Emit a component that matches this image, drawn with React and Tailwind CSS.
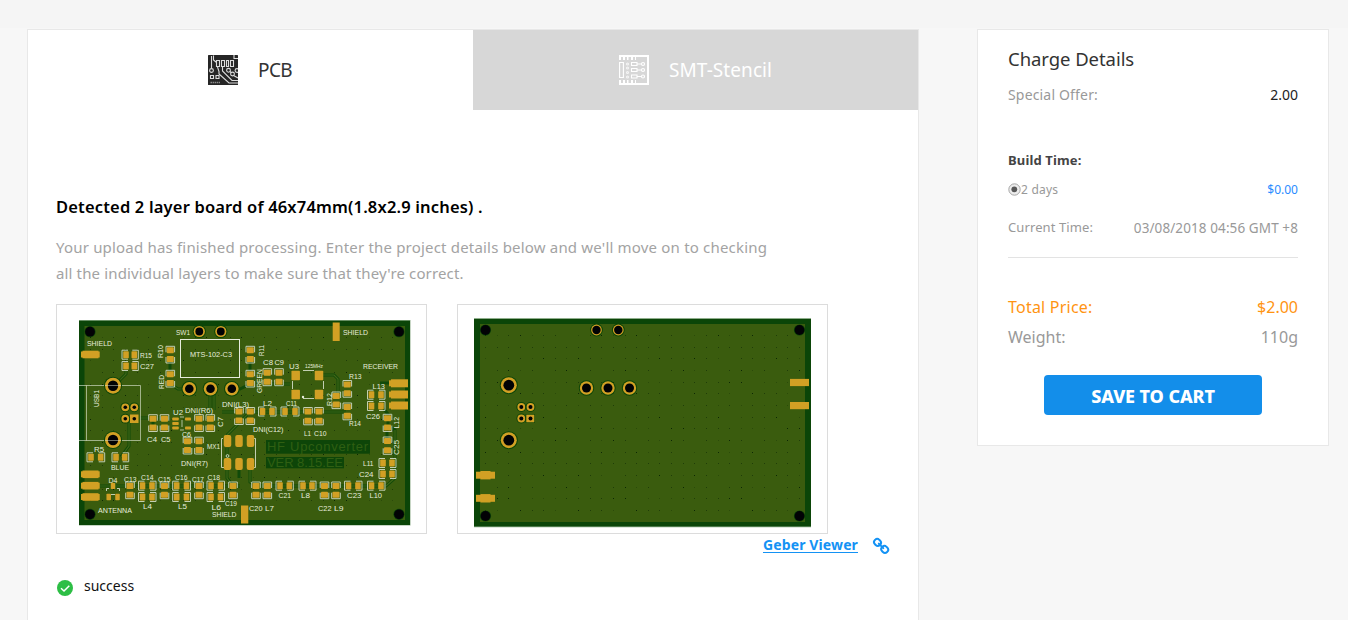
const SILK = '#e6ecdc';
const GOLD = '#d2a024';
const COPPER = '#3a5c0e';
const MASK = '#0b4508';

// Horizontal silkscreen labels: text, start x, end x, baseline
const labels = [
  ['SHIELD', 87, 112, 346], ['R15', 140, 152, 357.5], ['C27', 140, 154, 369], ['SW1', 176, 190, 334.5],
  ['MTS-102-C3', 190, 232, 357], ['C8', 263, 273, 365], ['C9', 274.5, 284, 365], ['U3', 289, 299, 368.5],
  ['SHIELD', 343, 368, 334.5], ['R13', 349, 361.5, 379], ['RECEIVER', 363, 398, 369], ['L13', 372.5, 385, 389],
  ['C26', 366, 380, 419], ['L2', 263, 272, 406], ['C11', 286, 297, 406], ['L1', 304, 311, 436],
  ['C10', 314, 326.5, 436], ['DNI(L3)', 222, 249, 407], ['DNI(C12)', 253, 283.5, 432], ['U2', 173, 183, 414.5],
  ['DNI(R6)', 185, 213, 412.5], ['C4', 147, 157, 442], ['C5', 161, 170.5, 442], ['C6', 182, 191, 436.5],
  ['DNI(R7)', 181, 208, 466], ['MX1', 207, 220, 448.5], ['R5', 94, 104, 451.5], ['BLUE', 111, 129, 469.5],
  ['D4', 108.5, 117.5, 482.5], ['C13', 124, 136.5, 481.5], ['C14', 141, 153.5, 480], ['C15', 158, 170.5, 481.5],
  ['C16', 175, 187.5, 480], ['C17', 192, 204, 481.5], ['C18', 207.5, 220, 480], ['L4', 143, 152, 508.5],
  ['L5', 178, 187, 508.5], ['L6', 211.5, 221, 509.5], ['C19', 225, 237, 506], ['SHIELD', 212, 236.5, 517],
  ['ANTENNA', 98, 132, 513], ['C20', 249, 262.5, 511], ['L7', 265, 274, 511], ['C21', 278.5, 291, 497.5],
  ['L8', 301, 310, 497.5], ['C22', 318, 331.5, 511], ['L9', 334, 343.5, 511], ['C23', 347, 361.5, 497.5],
  ['L10', 369.5, 382, 497.5], ['L11', 363, 373.5, 466], ['C24', 359, 373.5, 477], ['R14', 349, 361, 426],
];

// Labels turned by 90 degrees: text, baseline x, top y, bottom y
const uprights = [
  ['R10', 162.5, 345, 358], ['RED', 163.5, 375, 389], ['USB1', 98.5, 390, 407], ['R11', 264, 345, 356],
  ['GREEN', 262, 369, 393], ['R12', 331.5, 393, 406], ['L12', 399, 417, 428.5], ['C25', 399, 440, 455],
  ['C7', 222.5, 417, 427],
];

// Two-pad parts lying on a row
const rowParts = [
  [126, 134.3, 354.7], [126, 134.3, 366], [371.5, 381, 394.7], [371.5, 381, 406], [262.5, 272, 411.5],
  [285, 295, 411.5], [91, 100.7, 457.3], [116, 124.7, 457.3], [142.5, 152, 485.7], [142.5, 152, 497],
  [176.7, 186.5, 485.7], [176.7, 186.5, 497], [211, 220.5, 485.7], [211, 220.5, 497], [280, 289.3, 485.7],
  [303, 312, 485.7], [348.5, 358, 485.7], [371.5, 381, 485.7], [383, 392, 463], [383, 392, 474],
];

// Two-pad parts standing in a column
const colParts = [
  [170.3, 350.3, 359], [170.3, 374.3, 383], [250.3, 350.3, 359], [250.3, 374.3, 383], [267.3, 372.7, 381.7],
  [279, 372.7, 381.7], [347.3, 384.5, 393.2], [336.3, 396, 404.6], [347.3, 407, 415.8], [387.5, 418.3, 427.5],
  [387.5, 441, 450.3], [308, 411.5, 420.8], [319, 411.5, 420.8], [239, 411.5, 420.5], [250.3, 411.5, 420.5],
  [153, 418.7, 427.5], [164.5, 418.7, 427.5], [199, 418.7, 427.5], [210.3, 418.7, 427.5], [187.5, 441.2, 450],
  [199, 441.2, 450], [130, 486, 494.7], [164.5, 486, 494.7], [199, 486, 494.7], [233, 486, 494.7],
  [256, 486, 494.7], [267.3, 486, 494.7], [324.5, 486, 494.7], [336, 486, 494.7],
];

function Pad({ x, y, w = 6, h = 6, r = 0.8 }) {
  return <rect x={x - w / 2} y={y - h / 2} width={w} height={h} rx={r} fill={GOLD} />;
}

function Hole({ x, y, outer, inner }) {
  return (
    <g>
      <circle cx={x} cy={y} r={outer + 1} fill={MASK} />
      <circle cx={x} cy={y} r={outer} fill={GOLD} />
      <circle cx={x} cy={y} r={inner} fill="#020205" />
    </g>
  );
}

function Corner({ x, y }) {
  return (
    <g>
      <circle cx={x} cy={y} r="5.6" fill={MASK} />
      <circle cx={x} cy={y} r="4.9" fill="#020205" />
    </g>
  );
}

// Stitching vias on an 11.6px grid; some print darker than others
function Vias({ x, y, cols, rows }) {
  const dots = [];
  for (let r = 0; r < rows; r += 1) {
    for (let c = 0; c < cols; c += 1) {
      const n = (c * 7 + r * 13 + c * r * 3) % 10;
      if (n === 9) continue;
      dots.push([Math.round(x + c * 11.63), Math.round(y + r * 11.66), n < 2 ? 0.95 : n < 6 ? 0.55 : 0.3]);
    }
  }
  return (
    <g fill="#0a2404" shapeRendering="crispEdges">
      {dots.map(([dx, dy, o]) => (
        <rect key={`${dx}-${dy}`} x={dx} y={dy} width="1" height="1" opacity={o} />
      ))}
    </g>
  );
}

function FrontBoard() {
  return (
    <svg viewBox="57 305 369 228" className="block h-[228px] w-[369px]">
      <rect x="79" y="320" width="331.5" height="205.5" fill="#8fae8c" />
      <rect x="79" y="320.7" width="331" height="204.3" fill={MASK} />
      <rect x="84.5" y="326" width="320.5" height="194" fill={COPPER} />
      <Vias x={90} y={337} cols={27} rows={15} />

      <g fill="none" stroke="#114a09" strokeWidth="3">
        <path d="M126 368V374L114 386M170 362V372M170 384L178 389H189M210 392V412M214 392V410M129 420V446L121 457" />
        <path d="M140 418H170M153 430V418M233 389H240L250 384M250 362V372M267 384H290M322 375H334L338 379V396" />
        <path d="M222 412H346M247 415L227 435M227 448V478L233 486M250 470V482L256 486M239 470V478" />
        <path d="M100 486H240M256 486H386L395 478V430L387 424M380 383H390M381 406L388 414V430M387 430V442" />
      </g>
      <g fill="none" stroke="#416616" strokeWidth="1.2">
        <path d="M126 368V374L114 386M210 392V412M129 420V446L121 457M222 412H346M247 415L227 435" />
        <path d="M100 486H240M256 486H386L395 478V430M322 375H334L338 379V396M170 384L178 389H189" />
        <path d="M227 448V478L233 486M250 470V482L256 486M267 384H290M214 392V410M140 418H170" />
      </g>

      <g fill="none" stroke={SILK} strokeWidth="1">
        <rect x="180.5" y="339.5" width="59" height="38" />
        <path d="M79 385.5H140.5V440.5H79M86.5 385.5V440.5" opacity="0.6" />
        <path d="M303 370.5H314M303 398.5H314M292.5 381V389M323.5 381V389" opacity="0.8" />
        <path d="M223 438.5H221.5V467.5H224M254 438.5H255.5V467.5H253" opacity="0.8" />
        <path d="M106.5 491V488.5H109M117 488.5H119.5V491M111 494.5H115" opacity="0.8" />
        <path d="M180 417H184M180 430H184M182 420V427" opacity="0.7" />
      </g>

      <g fill="none" stroke={SILK} strokeWidth="1" opacity="0.8">
        {rowParts.map(([a, b, y]) => (
          <path
            key={`${a}-${y}`}
            d={`M${a + 2} ${y - 4.5}H${a - 4}V${y + 4.5}H${a + 2}M${b - 2} ${y - 4.5}H${b + 4}V${y + 4.5}H${b - 2}`}
          />
        ))}
        {colParts.map(([x, a, b]) => (
          <path
            key={`${x}-${a}`}
            d={`M${x - 4.3} ${a + 2}V${a - 4}H${x + 4.3}V${a + 2}M${x - 4.3} ${b - 2}V${b + 4}H${x + 4.3}V${b - 2}`}
          />
        ))}
      </g>
      {rowParts.map(([a, b, y]) => (
        <g key={`${a}-${y}`}>
          <Pad x={a} y={y} w={5.6} h={7} />
          <Pad x={b} y={y} w={5.6} h={7} />
        </g>
      ))}
      {colParts.map(([x, a, b]) => (
        <g key={`${x}-${a}`}>
          <Pad x={x} y={a} w={7} h={6} />
          <Pad x={x} y={b} w={7} h={6} />
        </g>
      ))}

      {[295.7, 319].map((x) => [375.5, 394.5].map((y) => <Pad key={`${x}-${y}`} x={x} y={y} w={8.5} h={9.5} />))}
      {[227.5, 239, 250.5].map((x) =>
        [441, 464].map((y) => <Pad key={`${x}-${y}`} x={x} y={y} w={7.5} h={12} r={2} />),
      )}
      <circle cx="227.5" cy="456" r="1.4" fill="none" stroke={SILK} strokeWidth="0.8" />
      <circle cx="303" cy="397" r="1.2" fill={SILK} />
      {[419, 423.5, 428].map((y) => <Pad key={y} x={175.5} y={y} w={6.5} h={3} />)}
      {[419, 428].map((y) => <Pad key={y} x={188} y={y} w={6} h={3} />)}
      <Pad x={113} y={486} w={4.5} h={6} />
      <Pad x={108.7} y={497} w={4.5} h={6.5} />
      <Pad x={117.5} y={497} w={4.5} h={6.5} />
      {[354.5, 474.3, 485.7, 497].map((y) => (
        <g key={y}>
          <rect x="81" y={y - 3} width="18.7" height="6" fill={GOLD} />
          <rect x="82.5" y={y - 3.8} width="16" height="7.6" fill={GOLD} />
        </g>
      ))}
      {[383.3, 394.5, 405.5].map((y) => (
        <g key={y}>
          <rect x="389" y={y - 3} width="19" height="6" fill={GOLD} />
          <rect x="391" y={y - 4} width="17" height="8" fill={GOLD} />
        </g>
      ))}
      <rect x="332.7" y="322.5" width="7" height="18.5" fill={GOLD} />
      <rect x="241" y="505.5" width="7.3" height="18" fill={GOLD} />

      <Corner x={90} y={331.7} />
      <Corner x={399} y={331.7} />
      <Corner x={90} y={514.3} />
      <Corner x={399} y={514.3} />
      <Hole x={199.3} y={331.5} outer={5.6} inner={3.9} />
      <Hole x={220.8} y={331.5} outer={5.6} inner={3.9} />
      <Hole x={189.3} y={388.7} outer={6.8} inner={4.3} />
      <Hole x={210.5} y={388.7} outer={6.8} inner={4.3} />
      <Hole x={231.8} y={388.7} outer={6.8} inner={4.3} />
      <Hole x={113} y={385.7} outer={8} inner={5.2} />
      <Hole x={113} y={440} outer={8} inner={5.2} />
      <path d="M105 385.5H121M105 440.5H121" stroke={SILK} strokeWidth="1" opacity="0.45" />
      <Hole x={125.3} y={407.3} outer={3.9} inner={1.8} />
      <Hole x={134.3} y={407.3} outer={3.9} inner={1.8} />
      <Hole x={125.3} y={418.7} outer={3.9} inner={1.8} />
      <rect x="130" y="414.5" width="8.5" height="8.5" fill={GOLD} />
      <circle cx="134.3" cy="418.7" r="1.8" fill="#020205" />

      <rect x="266" y="440" width="104" height="13.7" fill="#0d4508" />
      <rect x="266" y="457" width="78" height="11.3" fill="#0d4508" />
      <g fill="#2f5f12" className="font-['Liberation_Sans',sans-serif]" fontSize="13">
        <text x="267" y="450.5" textLength="101" lengthAdjust="spacing">HF Upconverter</text>
        <text x="267" y="467.3" textLength="76" lengthAdjust="spacing">VER 8.15.EE</text>
      </g>

      <g fill={SILK} className="font-['Liberation_Sans',sans-serif]" fontSize="8">
        {labels.map(([t, a, b, y]) => (
          <text key={`${t}-${a}`} x={a} y={y} textLength={b - a} lengthAdjust="spacingAndGlyphs">{t}</text>
        ))}
        {uprights.map(([t, x, a, b]) => (
          <text
            key={t}
            transform={`translate(${x} ${b}) rotate(-90)`}
            textLength={b - a}
            lengthAdjust="spacingAndGlyphs"
          >
            {t}
          </text>
        ))}
        <text x="305" y="368" fontSize="6" textLength="18" lengthAdjust="spacingAndGlyphs">125MHz</text>
      </g>
    </svg>
  );
}

function BackBoard() {
  return (
    <svg viewBox="458 305 369 228" className="block h-[228px] w-[369px]">
      <rect x="474" y="318" width="337" height="209.3" fill="#8fae8c" />
      <rect x="474" y="319" width="337" height="207.5" fill={MASK} />
      <rect x="480" y="324" width="325" height="198" fill={COPPER} />
      <Vias x={485} y={335} cols={28} rows={16} />
      <Corner x={485.5} y={330} />
      <Corner x={799.5} y={330} />
      <Corner x={485.5} y={516} />
      <Corner x={799.5} y={516} />
      <Hole x={596.5} y={330} outer={5.4} inner={4.2} />
      <Hole x={618.3} y={330} outer={5.4} inner={4.2} />
      <Hole x={586.5} y={388} outer={6.7} inner={4.5} />
      <Hole x={608} y={388} outer={6.7} inner={4.5} />
      <Hole x={629.5} y={388} outer={6.7} inner={4.5} />
      <Hole x={508.8} y={385.2} outer={8} inner={5.4} />
      <Hole x={508.8} y={440.2} outer={8} inner={5.4} />
      <Hole x={521.3} y={407} outer={3.9} inner={2} />
      <Hole x={530.5} y={407} outer={3.9} inner={2} />
      <Hole x={521.3} y={418.5} outer={3.9} inner={2} />
      <rect x="525.5" y="414" width="9.5" height="9" fill={MASK} />
      <rect x="526.3" y="414.7" width="8" height="7.6" fill={GOLD} />
      <circle cx="530.5" cy="418.5" r="2" fill="#020205" />
      {[475.2, 498.3].map((y) => (
        <g key={y}>
          <rect x="476" y={y - 3.5} width="19" height="7" fill={GOLD} />
          <rect x="480.5" y={y - 4.2} width="10" height="8.4" fill={GOLD} />
        </g>
      ))}
      {[382.5, 405.6].map((y) => (
        <rect key={y} x="790" y={y - 3.6} width="19" height="7.2" fill={GOLD} />
      ))}
    </svg>
  );
}

function PcbIcon() {
  return (
    <svg viewBox="0 0 30 30" className="h-[30px] w-[30px]">
      <rect width="30" height="30" rx="0.5" fill="#262626" />
      <g fill="none" stroke="#dcdcdc" strokeWidth="1.1">
        <path d="M3.5 1V13M5.500 0.500V5L8.500 7.500M8.500 5.500H11.500V11.500H8.500ZM13.500 5.500H16.500V11.500H13.500ZM18.500 5.500H20.500V11.500H18.500ZM22.500 5.500H25.500V11.500H22.500Z" />
        <path d="M9.500 12L11 16.500V19L21 28H30M14.500 12V16L24 25.500H30M26 0V3.500H30" />
        <path d="M2.500 20.500H5.500V23.500H2.500ZM8 20.500H11V23.500H8Z" />
        <circle cx="3.500" cy="15.500" r="1.900" />
        <circle cx="20.500" cy="15.300" r="1.900" />
        <circle cx="24.500" cy="19" r="1.900" />
        <circle cx="29" cy="15.500" r="1.900" />
        <path d="M22 16.500L23 17.500M25.500 20.500L30 23" />
      </g>
      <path d="M2.500 27.500H12" stroke="#8c8c8c" strokeWidth="1.400" strokeDasharray="1.500 0.600" />
    </svg>
  );
}

function StencilIcon() {
  return (
    <svg viewBox="0 0 30 30" className="h-[30px] w-[30px]" fill="none" stroke="#fff">
      <path d="M0 1H29V29H0" strokeWidth="2" />
      <path d="M0 3.500H2M4 3.500H6M8 3.500H9.500M12 3.500H14M16 3.500H17M0 26.500H2M4 26.500H6M8 26.500H9.500M12 26.500H14M16 26.500H17" strokeWidth="3" />
      <path d="M0.600 7.500H4.400V22.500H0.600Z" strokeWidth="1.100" />
      <g strokeWidth="1.100">
        <g opacity="0.75">
          <circle cx="8.500" cy="9" r="1" /><circle cx="8.500" cy="13" r="1" />
          <circle cx="8.500" cy="17.500" r="1" /><circle cx="8.500" cy="22" r="1" />
        </g>
        <path d="M12.500 7.500H18V10.500H12.500ZM12.500 13.500H18V16.500H12.500ZM12.500 20H18V23H12.500ZM18 9H24M18 15H24M18 21.500H24" />
      </g>
      <g fill="#d7d7d7" strokeWidth="1.200">
        <circle cx="24" cy="9" r="1.500" /><circle cx="24" cy="15" r="1.500" /><circle cx="24" cy="21.500" r="1.500" />
      </g>
    </svg>
  );
}

function LinkIcon() {
  return (
    <svg viewBox="0 0 18 18" className="ml-[14px] h-[18px] w-[18px]" fill="none" stroke="#1492f4" strokeWidth="2">
      <rect x="2" y="2.300" width="7" height="6.200" rx="3" transform="rotate(45 5.500 5.400)" />
      <rect x="9.200" y="9.300" width="7" height="6.200" rx="3" transform="rotate(45 12.700 12.400)" />
      <path d="M6.800 6.600L11.300 11.100" strokeLinecap="round" />
    </svg>
  );
}

function Row({ className, children }) {
  return <div className={`flex items-center justify-between whitespace-nowrap ${className}`}>{children}</div>;
}

export default function App() {
  return (
    <div className="h-[620px] w-[1348px] overflow-hidden bg-[#f7f7f7] font-['Noto_Sans','Open_Sans',sans-serif]">
      <div className="h-7 bg-[#f5f5f5]" />
      <div className="flex items-start pt-px pl-[27px]">
        <main className="h-[600px] w-[892px] border border-[#e8e8e8] bg-white">
          <div className="flex h-20">
            <div className="flex w-1/2 items-center pl-[180px]">
              <PcbIcon />
              <span className="ml-5 text-[19px] tracking-[-0.6px] text-[#333]">PCB</span>
            </div>
            <div className="flex w-1/2 items-center bg-[#d7d7d7] pl-[146px]">
              <StencilIcon />
              <span className="ml-5 text-[19px] tracking-[0.07px] text-white">SMT-Stencil</span>
            </div>
          </div>
          <div className="px-7 pt-[84px]">
            <h1 className="h-[26px] whitespace-nowrap text-[16.5px] leading-[26px] font-semibold tracking-[0.17px] text-black">
              <span>Detected 2 layer board of 46x74mm(1.8x2.9 inches) .</span>
            </h1>
            <p className="mt-[14px] whitespace-nowrap text-[15px] leading-[26px] tracking-[0.19px] text-[#a3a3a3]">
              <span>Your upload has finished processing. Enter the project details below and we'll move on to checking</span>
              <br />
              <span className="tracking-[0.14px]">all the individual layers to make sure that they're correct.</span>
            </p>
            <div className="mt-[18px] flex gap-[30px]">
              <div className="border border-[#dcdcdc]"><FrontBoard /></div>
              <div className="border border-[#dcdcdc]"><BackBoard /></div>
            </div>
            <div className="flex h-[24px] items-center justify-end">
              <a className="-mt-[2px] text-[14px] leading-5 font-bold tracking-[0.12px] text-[#1492f4] underline underline-offset-2">Geber Viewer</a>
              <LinkIcon />
            </div>
            <div className="mt-[20px] flex h-[20px] items-center">
              <svg viewBox="0 0 16 16" className="mt-[-1px] ml-px h-4 w-4">
                <circle cx="8" cy="8" r="8" fill="#2dbe45" />
                <path d="M4 8.300L7 11L12.300 5.700" fill="none" stroke="#fff" strokeWidth="1.500" />
              </svg>
              <span className="-mt-[6px] ml-[11px] text-[14px] text-[#111]">success</span>
            </div>
          </div>
        </main>
        <aside className="ml-[58px] h-[417px] w-[352px] border border-[#e8e8e8] bg-white px-[30px] pt-[14px]">
          <h2 className="h-[30px] text-[18.5px] leading-[30px] tracking-[-0.06px] whitespace-nowrap text-[#333]"><span>Charge Details</span></h2>
          <Row className="mt-[9px] h-[22px] text-[14px] text-[#999]">
            <span className="tracking-[0.17px]">Special Offer:</span>
            <span className="text-[#222]">2.00</span>
          </Row>
          <Row className="mt-[46px] h-[20px] text-[13px] font-bold tracking-[0.15px] text-[#444]"><span>Build Time:</span></Row>
          <Row className="mt-[9px] h-[20px] text-[12px] text-[#999]">
            <span className="flex items-center">
              <svg viewBox="0 0 13 13" className="-mt-[2px] h-[13px] w-[13px]">
                <circle cx="6.500" cy="6.500" r="5.700" fill="#ececec" stroke="#a6a6a6" strokeWidth="1" />
                <circle cx="6.300" cy="6.300" r="2.900" fill="#585858" />
              </svg>
              <span className="tracking-[0.2px]">2 days</span>
            </span>
            <span className="text-[#2a8cff]">$0.00</span>
          </Row>
          <Row className="mt-[18px] h-[20px] text-[13px] text-[#999]">
            <span className="tracking-[0.1px]">Current Time:</span>
            <span className="text-[13.5px] tracking-[0.1px]">03/08/2018 04:56 GMT +8</span>
          </Row>
          <div className="mt-[19px] h-px bg-[#e3e3e3]" />
          <Row className="mt-[34px] h-[30px] text-[16px] text-[#ff9412]">
            <span className="tracking-[0.22px]">Total Price:</span>
            <span>$2.00</span>
          </Row>
          <Row className="h-[30px] text-[16px] text-[#999]">
            <span>Weight:</span>
            <span>110g</span>
          </Row>
          <button className="mx-auto mt-[23px] flex h-10 w-[218px] items-center justify-center rounded-[4px] bg-[#138eea] pt-[2px] text-[18px] font-extrabold tracking-[-0.1px] whitespace-nowrap text-white">
            <span>SAVE TO CART</span>
          </button>
        </aside>
      </div>
    </div>
  );
}
